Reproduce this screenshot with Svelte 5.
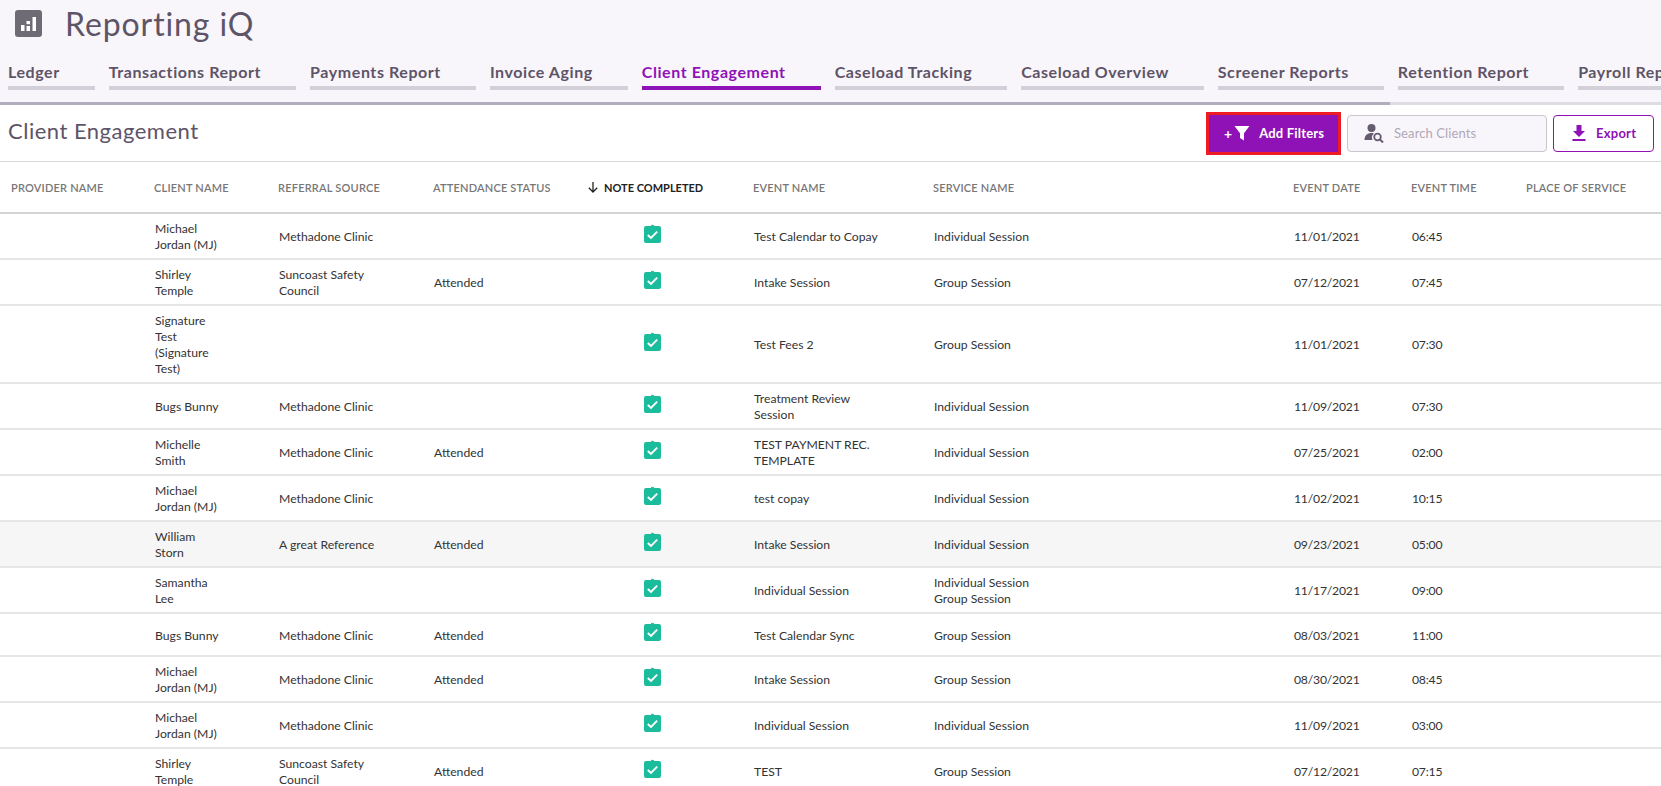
<script>
  const tabs = [
    "Ledger",
    "Transactions Report",
    "Payments Report",
    "Invoice Aging",
    "Client Engagement",
    "Caseload Tracking",
    "Caseload Overview",
    "Screener Reports",
    "Retention Report",
    "Payroll Report",
  ];

  const columns = [
    "Provider Name",
    "Client Name",
    "Referral Source",
    "Attendance Status",
    "Note Completed",
    "Event Name",
    "Service Name",
    "Event Date",
    "Event Time",
    "Place of Service",
  ];

  const mj = "Michael Jordan (MJ)";
  const clinic = "Methadone Clinic";
  const suncoast = "Suncoast Safety Council";
  const solo = ["Individual Session"];
  const group = ["Group Session"];

  const rows = [
    { client: mj, source: clinic, status: "", event: "Test Calendar to Copay", service: solo, date: "11/01/2021", time: "06:45" },
    { client: "Shirley Temple", source: suncoast, status: "Attended", event: "Intake Session", service: group, date: "07/12/2021", time: "07:45" },
    { client: "Signature Test (Signature Test)", source: "", status: "", event: "Test Fees 2", service: group, date: "11/01/2021", time: "07:30" },
    { client: "Bugs Bunny", source: clinic, status: "", event: "Treatment Review Session", service: solo, date: "11/09/2021", time: "07:30" },
    { client: "Michelle Smith", source: clinic, status: "Attended", event: "TEST PAYMENT REC. TEMPLATE", service: solo, date: "07/25/2021", time: "02:00" },
    { client: mj, source: clinic, status: "", event: "test copay", service: solo, date: "11/02/2021", time: "10:15" },
    { client: "William Storn", source: "A great Reference", status: "Attended", event: "Intake Session", service: solo, date: "09/23/2021", time: "05:00", hover: true },
    { client: "Samantha Lee", source: "", status: "", event: "Individual Session", service: ["Individual Session", "Group Session"], date: "11/17/2021", time: "09:00" },
    { client: "Bugs Bunny", source: clinic, status: "Attended", event: "Test Calendar Sync", service: group, date: "08/03/2021", time: "11:00" },
    { client: mj, source: clinic, status: "Attended", event: "Intake Session", service: group, date: "08/30/2021", time: "08:45" },
    { client: mj, source: clinic, status: "", event: "Individual Session", service: solo, date: "11/09/2021", time: "03:00" },
    { client: "Shirley Temple", source: suncoast, status: "Attended", event: "TEST", service: group, date: "07/12/2021", time: "07:15" },
  ];
</script>

<div class="page">
  <header class="top">
    <div class="brand">
      <svg class="logo" viewBox="0 0 27 27" width="27" height="27">
        <rect width="27" height="27" rx="3" fill="#6f6b75" />
        <rect x="6" y="15" width="3.5" height="6" fill="#fff" />
        <rect x="11.5" y="11" width="3.5" height="3.2" fill="#fff" />
        <rect x="11.5" y="16" width="3.5" height="5" fill="#fff" />
        <rect x="17.5" y="7" width="3.5" height="14" fill="#fff" />
      </svg>
      <h1>Reporting iQ</h1>
    </div>
    <nav class="tabs">
      {#each tabs as tab}
        <div class="tab" class:active={tab === "Client Engagement"}>{tab}</div>
      {/each}
    </nav>
    <div class="track"><div class="thumb"></div></div>
  </header>

  <div class="titlebar">
    <h2>Client Engagement</h2>
    <div class="actions">
      <button class="filters">
        <span class="plus">+</span>
        <svg viewBox="0 0 16 16" width="16" height="16"><path d="M0.5 1h15L10 8.2V15.5L6 13V8.2z" fill="#fff" /></svg>
        <span class="label">Add Filters</span>
      </button>
      <div class="search">
        <svg viewBox="0 0 20 20" width="20" height="20">
          <circle cx="7.5" cy="5" r="4" fill="#665c70" />
          <path d="M0.5 17c0-4.5 3-7 7-7 1 0 1.7.1 2.4.4A5.4 5.4 0 0 0 8.6 17z" fill="#665c70" />
          <circle cx="13.5" cy="14" r="3.3" fill="none" stroke="#665c70" stroke-width="1.8" />
          <path d="M16 16.5l3 3" stroke="#665c70" stroke-width="2" />
        </svg>
        <span>Search Clients</span>
      </div>
      <button class="export">
        <svg viewBox="0 0 14 16" width="14" height="16"><path d="M4.5 0h5v6H13L7 12 1 6h3.5zM0.5 14h13v2H.5z" fill="#8e12b5" /></svg>
        <span>Export</span>
      </button>
    </div>
  </div>

  <table>
    <colgroup>
      <col style="width:143px" />
      <col style="width:124px" />
      <col style="width:155px" />
      <col style="width:141px" />
      <col style="width:179px" />
      <col style="width:180px" />
      <col style="width:360px" />
      <col style="width:118px" />
      <col style="width:115px" />
      <col />
    </colgroup>
    <thead>
      <tr>
        {#each columns as col}
          {#if col === "Note Completed"}
            <th class="sorted">
              <div class="sort">
                <svg viewBox="0 0 12 12" width="12" height="12"><path d="M6 1v10M1.8 6.8L6 11l4.2-4.2" fill="none" stroke="#222" stroke-width="1.3" /></svg>
                <span>{col}</span>
              </div>
            </th>
          {:else}
            <th>{col}</th>
          {/if}
        {/each}
      </tr>
    </thead>
    <tbody>
      {#each rows as row}
        <tr class:hover={row.hover}>
          <td></td>
          <td><div class="client">{row.client}</div></td>
          <td><div class="source">{row.source}</div></td>
          <td>{row.status}</td>
          <td class="note">
            <svg viewBox="0 0 17 19" width="17" height="19">
              <path d="M2 2h4.8a1.8 1.8 0 0 1 3.4 0H15a2 2 0 0 1 2 2v13a2 2 0 0 1-2 2H2a2 2 0 0 1-2-2V4a2 2 0 0 1 2-2z" fill="#1abc9c" />
              <path d="M3.8 11l3.2 3 6.2-6.4" fill="none" stroke="#fff" stroke-width="1.9" />
            </svg>
          </td>
          <td><div class="event">{row.event}</div></td>
          <td>
            {#each row.service as line}
              <div>{line}</div>
            {/each}
          </td>
          <td class="num">{row.date}</td>
          <td class="num">{row.time}</td>
          <td></td>
        </tr>
      {/each}
    </tbody>
  </table>
</div>

<style>
  :global(body) {
    margin: 0;
    background: #fff;
    font-family: "Lato", "Open Sans", sans-serif;
  }

  .page {
    height: 100vh;
    overflow: hidden;
  }

  .top {
    background: #f8f6fa;
  }

  .brand {
    display: flex;
    align-items: center;
    height: 46px;
    padding-left: 15px;
    gap: 23px;
  }

  h1 {
    margin: 0;
    font-size: 32px;
    font-weight: 400;
    color: #5e5468;
    letter-spacing: 0.9px;
  }

  .tabs {
    display: flex;
    gap: 14px;
    padding: 14px 0 0 8px;
    overflow: hidden;
    white-space: nowrap;
  }

  .tab {
    flex: none;
    padding: 0 35px 3px 0;
    font-size: 16px;
    line-height: 23px;
    font-weight: 700;
    letter-spacing: 0.57px;
    color: #5e5468;
    border-bottom: 4px solid #d3d0da;
  }

  .tab.active {
    color: #8e12b5;
    border-bottom-color: #8e12b5;
  }

  .track {
    height: 3px;
    margin-top: 12px;
    background: #dedce3;
  }

  .thumb {
    width: 1390px;
    height: 100%;
    background: #b0adbd;
  }

  .titlebar {
    display: flex;
    align-items: center;
    justify-content: space-between;
    height: 56px;
    padding: 0 7px 0 8px;
    border-bottom: 1px solid #d8d8d8;
  }

  h2 {
    margin: 0 0 6px;
    font-size: 22px;
    font-weight: 400;
    letter-spacing: 0.5px;
    color: #5e5468;
  }

  .actions {
    display: flex;
    align-items: center;
    gap: 6px;
  }

  button {
    font-family: inherit;
    cursor: pointer;
  }

  .filters {
    display: flex;
    align-items: center;
    width: 135px;
    height: 43px;
    padding: 0 0 0 15px;
    border: 3px solid #ed1c24;
    background: #8e12b5;
    color: #fff;
    font-size: 13px;
    font-weight: 700;
  }

  .plus {
    font-size: 14px;
    margin-right: 2px;
  }

  .label {
    margin-left: 9px;
    letter-spacing: 0.2px;
  }

  .search {
    display: flex;
    align-items: center;
    box-sizing: border-box;
    width: 200px;
    height: 37px;
    padding-left: 16px;
    gap: 10px;
    border: 1px solid #c9c6cd;
    border-radius: 4px;
    background: #f8f6fa;
    color: #b0a8b8;
    font-size: 13px;
    letter-spacing: 0.1px;
  }

  .export {
    display: flex;
    align-items: center;
    box-sizing: border-box;
    width: 101px;
    height: 37px;
    padding: 0 0 0 18px;
    gap: 10px;
    border: 1px solid #8e12b5;
    border-radius: 4px;
    background: #fff;
    color: #8e12b5;
    font-size: 13px;
    font-weight: 700;
    letter-spacing: 0.25px;
  }

  table {
    width: 100%;
    table-layout: fixed;
    border-collapse: collapse;
  }

  th {
    height: 50px;
    padding: 0 0 0 11px;
    text-align: left;
    font-size: 11px;
    font-weight: 600;
    letter-spacing: 0.2px;
    text-transform: uppercase;
    color: #777;
    border-bottom: 2px solid #d4d4d4;
  }

  th.sorted {
    color: #222;
    font-weight: 700;
    letter-spacing: 0;
    padding-left: 24px;
  }

  .sort {
    display: flex;
    align-items: center;
    gap: 5px;
  }

  td {
    padding: 7px 0 5px 12px;
    font-size: 12.2px;
    line-height: 16px;
    color: #333;
    border-bottom: 2px solid #e6e6e6;
    vertical-align: middle;
  }

  td.num {
    letter-spacing: -0.2px;
  }

  tr.hover td {
    background: #f6f6f6;
  }

  .client {
    width: 66px;
  }

  .source {
    width: 108px;
  }

  .event {
    width: 130px;
  }

  td.note {
    padding: 3px 0 9px;
    text-align: center;
    height: 29px;
  }

  td.note svg {
    display: block;
    margin: 0 auto;
  }
</style>
